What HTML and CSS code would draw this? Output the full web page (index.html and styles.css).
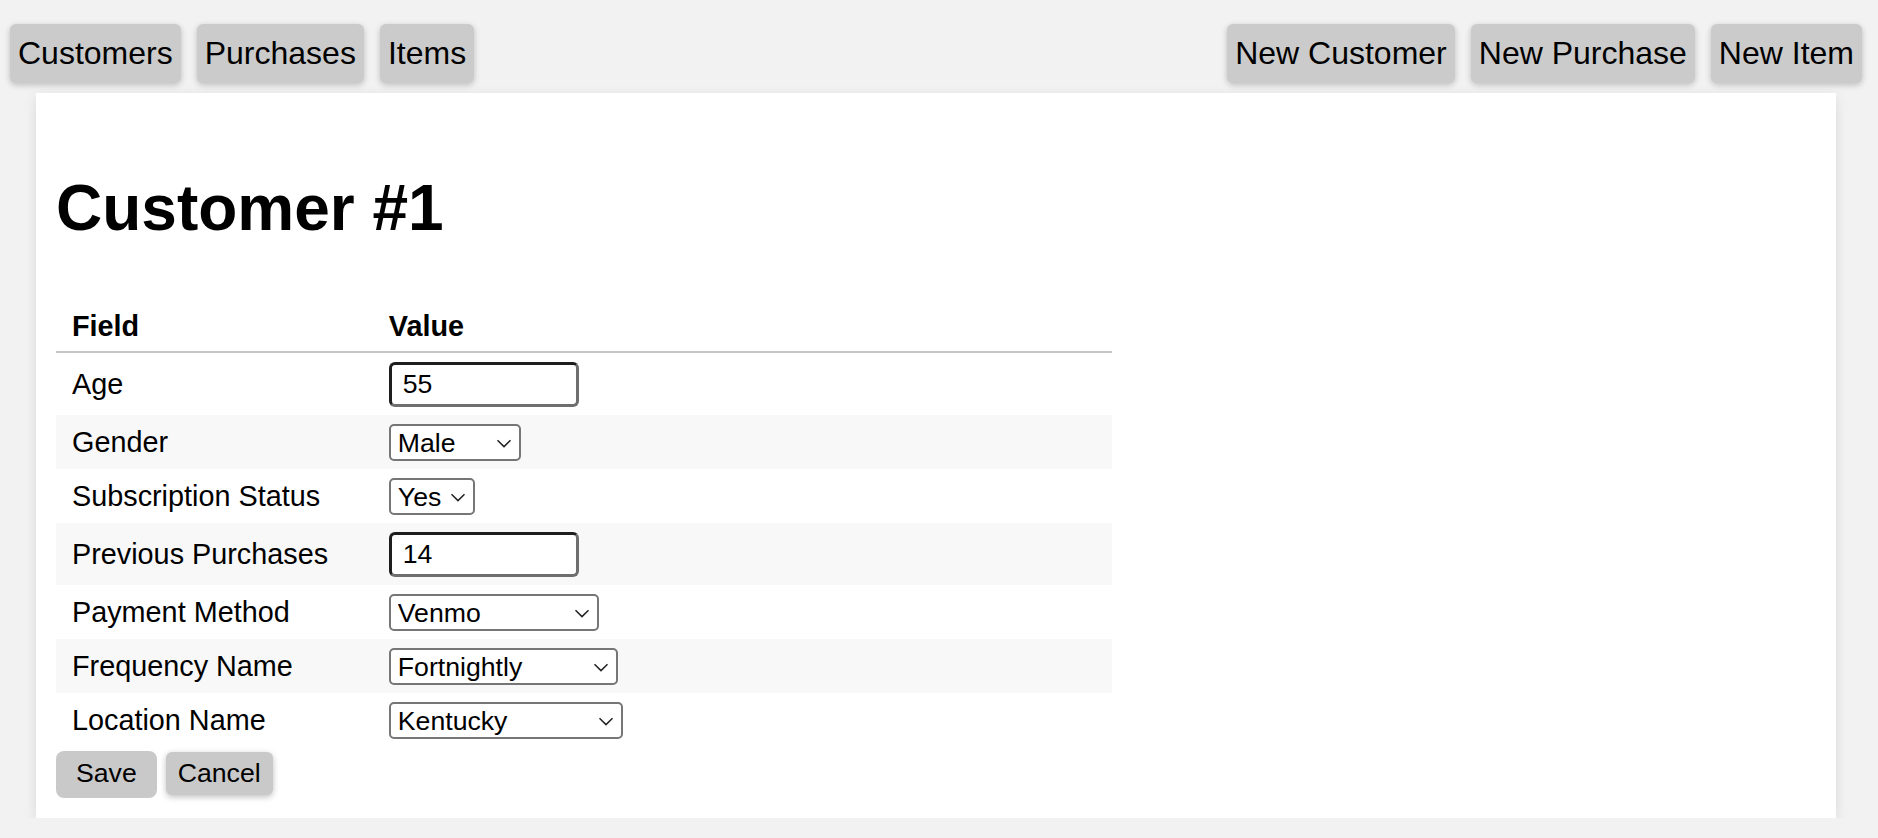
FILE: index.html
```html
<!DOCTYPE html>
<html lang="en">
<head>
<meta charset="utf-8">
<title>Customer #1</title>
<link rel="stylesheet" href="styles.css">
</head>
<body>
<nav class="topnav">
  <div class="nav-group">
    <button class="nav-btn">Customers</button>
    <button class="nav-btn">Purchases</button>
    <button class="nav-btn">Items</button>
  </div>
  <div class="nav-group">
    <button class="nav-btn">New Customer</button>
    <button class="nav-btn">New Purchase</button>
    <button class="nav-btn">New Item</button>
  </div>
</nav>
<main class="card">
  <h1 class="title">Customer #1</h1>
  <form class="customer-form">
    <table class="fields">
      <thead>
        <tr><th class="col-field">Field</th><th>Value</th></tr>
      </thead>
      <tbody>
        <tr>
          <td>Age</td>
          <td><input class="text-input" type="text" value="55"></td>
        </tr>
        <tr>
          <td>Gender</td>
          <td><span class="sel-wrap"><select class="sel w-gender"><option selected>Male</option><option>Female</option></select><svg class="chev" width="16" height="9" viewBox="0 0 16 9"><path d="M1.5 1.2 L8 7.6 L14.5 1.2" fill="none" stroke="#222" stroke-width="1.5"/></svg></span></td>
        </tr>
        <tr>
          <td>Subscription Status</td>
          <td><span class="sel-wrap"><select class="sel w-yes"><option selected>Yes</option><option>No</option></select><svg class="chev" width="16" height="9" viewBox="0 0 16 9"><path d="M1.5 1.2 L8 7.6 L14.5 1.2" fill="none" stroke="#222" stroke-width="1.5"/></svg></span></td>
        </tr>
        <tr>
          <td>Previous Purchases</td>
          <td><input class="text-input" type="text" value="14"></td>
        </tr>
        <tr>
          <td>Payment Method</td>
          <td><span class="sel-wrap"><select class="sel w-pay"><option selected>Venmo</option><option>PayPal</option><option>Credit Card</option><option>Cash</option></select><svg class="chev" width="16" height="9" viewBox="0 0 16 9"><path d="M1.5 1.2 L8 7.6 L14.5 1.2" fill="none" stroke="#222" stroke-width="1.5"/></svg></span></td>
        </tr>
        <tr>
          <td>Frequency Name</td>
          <td><span class="sel-wrap"><select class="sel w-freq"><option selected>Fortnightly</option><option>Weekly</option><option>Monthly</option></select><svg class="chev" width="16" height="9" viewBox="0 0 16 9"><path d="M1.5 1.2 L8 7.6 L14.5 1.2" fill="none" stroke="#222" stroke-width="1.5"/></svg></span></td>
        </tr>
        <tr>
          <td>Location Name</td>
          <td><span class="sel-wrap"><select class="sel w-loc"><option selected>Kentucky</option><option>Maine</option><option>Ohio</option></select><svg class="chev" width="16" height="9" viewBox="0 0 16 9"><path d="M1.5 1.2 L8 7.6 L14.5 1.2" fill="none" stroke="#222" stroke-width="1.5"/></svg></span></td>
        </tr>
      </tbody>
    </table>
    <div class="actions">
      <button type="button" class="btn-save">Save</button>
      <button type="button" class="btn-cancel">Cancel</button>
    </div>
  </form>
</main>
</body>
</html>
```
FILE: styles.css
```css
* { box-sizing: border-box; }

body {
  margin: 0;
  background: #f2f2f2;
  font-family: "Liberation Sans", Arial, Helvetica, sans-serif;
  font-size: 32px;
  color: #000;
}

.topnav {
  display: flex;
  justify-content: space-between;
  padding: 24px 16px 10px 10px;
}

.nav-group {
  display: flex;
  gap: 16px;
}

.nav-btn {
  font-family: inherit;
  font-size: 32px;
  line-height: normal;
  padding: 11px 8px;
  border: none;
  border-radius: 6px;
  background: #cbcbcb;
  color: #000;
  box-shadow: 0 2px 6px rgba(0, 0, 0, 0.22);
}

.card {
  margin-left: 36px;
  width: 1800px;
  background: #fff;
  padding: 20px;
  box-shadow: 0 4px 12px rgba(0, 0, 0, 0.1);
}

.title {
  font-size: 64px;
  font-weight: bold;
  line-height: normal;
  margin: 58px 0 57px;
}

.customer-form { margin: 0; }

.fields {
  width: 60%;
  border-collapse: collapse;
  font-size: 28.8px;
}

.fields th {
  text-align: left;
  font-weight: bold;
  padding: 8px 16px;
  border-bottom: 2px solid #c6c6c6;
}

.fields .col-field { width: 30%; }

.fields td {
  padding: 9px 16px 8px;
}

.fields tbody tr:nth-child(even) { background: #f8f8f8; }

.text-input {
  width: 190px;
  height: 45px;
  font-family: inherit;
  font-size: 26.67px;
  padding: 0 11px;
  border-style: solid;
  border-width: 3px;
  border-color: #1e1e1e #6e6e6e #6e6e6e #1e1e1e;
  border-radius: 6px;
  background: #fff;
  color: #000;
}

.sel-wrap {
  position: relative;
  display: inline-flex;
}

.sel {
  -webkit-appearance: none;
  appearance: none;
  height: 37px;
  font-family: inherit;
  font-size: 26.67px;
  padding: 0 28px 0 7px;
  border: 2px solid #767676;
  border-radius: 5px;
  background: #fff;
  color: #000;
}

.w-gender { width: 132px; }
.w-yes { width: 86px; }
.w-pay { width: 210px; }
.w-freq { width: 229px; }
.w-loc { width: 234px; }

.chev {
  position: absolute;
  right: 9px;
  top: 15px;
  pointer-events: none;
}

.actions { margin-top: 4px; }

.btn-save,
.btn-cancel {
  font-family: inherit;
  font-size: 26.67px;
  line-height: normal;
  border: none;
  background: #c9c9c9;
  color: #000;
}

.btn-save {
  padding: 7px 20px 9px;
  border-radius: 8px;
}

.btn-cancel {
  padding: 6px 12px;
  border-radius: 6px;
  box-shadow: 0 2px 6px rgba(0, 0, 0, 0.25);
}
```
